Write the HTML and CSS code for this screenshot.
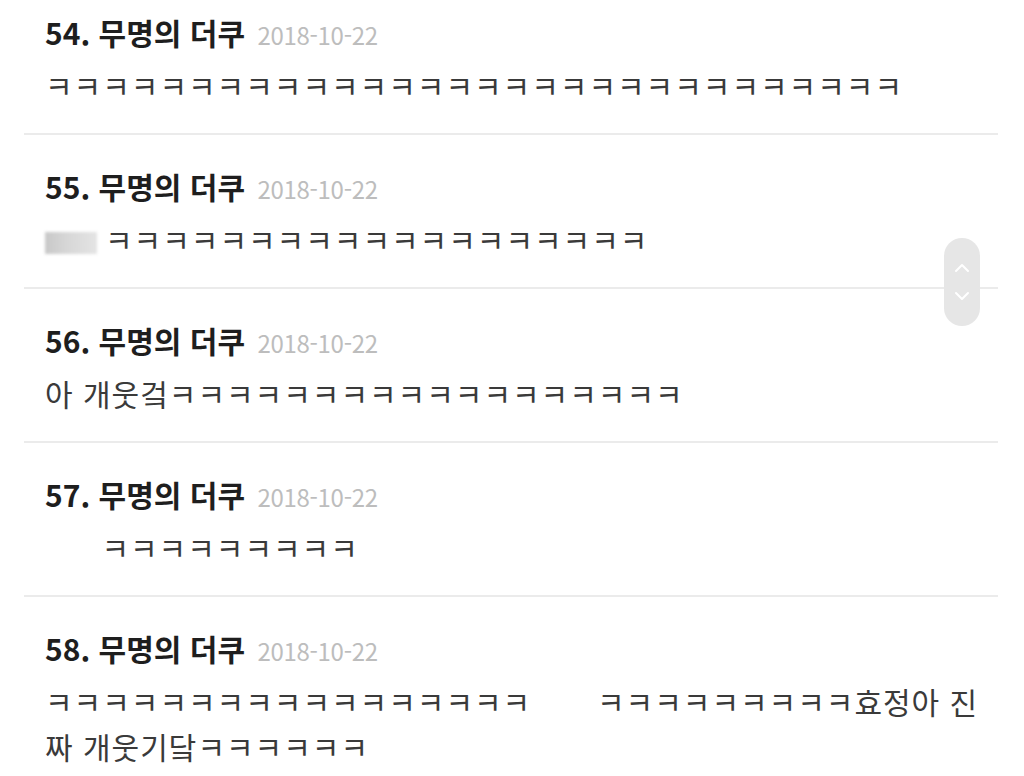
FILE: index.html
```html
<!DOCTYPE html>
<html lang="ko">
<head>
    <meta charset="UTF-8">
    <meta name="viewport" content="width=device-width, initial-scale=1.0">
    <title>댓글</title>
    <link rel="stylesheet" href="styles.css">
</head>
<body>
    <ul class="comments">
        <li class="comment">
            <div class="comment-head"><span class="num">54. 무명의 더쿠</span> <span class="date">2018-10-22</span></div>
            <p class="comment-body">ㅋㅋㅋㅋㅋㅋㅋㅋㅋㅋㅋㅋㅋㅋㅋㅋㅋㅋㅋㅋㅋㅋㅋㅋㅋㅋㅋㅋㅋㅋ</p>
        </li>
        <li class="comment">
            <div class="comment-head"><span class="num">55. 무명의 더쿠</span> <span class="date">2018-10-22</span></div>
            <p class="comment-body"><span class="emoticon"></span>ㅋㅋㅋㅋㅋㅋㅋㅋㅋㅋㅋㅋㅋㅋㅋㅋㅋㅋㅋ</p>
        </li>
        <li class="comment">
            <div class="comment-head"><span class="num">56. 무명의 더쿠</span> <span class="date">2018-10-22</span></div>
            <p class="comment-body">아 개웃겈ㅋㅋㅋㅋㅋㅋㅋㅋㅋㅋㅋㅋㅋㅋㅋㅋㅋㅋ</p>
        </li>
        <li class="comment">
            <div class="comment-head"><span class="num">57. 무명의 더쿠</span> <span class="date">2018-10-22</span></div>
            <p class="comment-body">      ㅋㅋㅋㅋㅋㅋㅋㅋㅋ</p>
        </li>
        <li class="comment">
            <div class="comment-head"><span class="num">58. 무명의 더쿠</span> <span class="date">2018-10-22</span></div>
            <p class="comment-body">ㅋㅋㅋㅋㅋㅋㅋㅋㅋㅋㅋㅋㅋㅋㅋㅋㅋ       ㅋㅋㅋㅋㅋㅋㅋㅋㅋ효정아 진짜 개웃기닼ㅋㅋㅋㅋㅋㅋ</p>
        </li>
    </ul>

    <div class="scroller">
        <svg viewBox="0 0 36 88" width="36" height="88">
            <path d="M12 33 L18 27 L24 33" fill="none" stroke="#fff" stroke-width="2" stroke-linecap="round" stroke-linejoin="round"/>
            <path d="M12 55 L18 61 L24 55" fill="none" stroke="#fff" stroke-width="2" stroke-linecap="round" stroke-linejoin="round"/>
        </svg>
    </div>
</body>
</html>
```

FILE: styles.css
```css
body {
    margin: 0;
    background-color: #ffffff;
    font-family: "Noto Sans CJK KR", "Noto Sans", sans-serif;
    overflow: hidden;
}
.comments {
    list-style: none;
    margin: 0 26px 0 24px;
    padding: 0;
}
.comment {
    padding: 30px 10px 25px 21px;
    border-top: 2px solid #ebebeb;
}
.comment:first-child {
    padding-top: 11px;
    border-top: none;
}
.comment-head {
    height: 42px;
    line-height: 42px;
    white-space: nowrap;
}
.num {
    font-size: 30px;
    font-weight: bold;
    color: #1e1e1e;
    letter-spacing: 0;
}
.date {
    font-size: 24px;
    color: #bdbdbd;
    margin-left: 8px;
    letter-spacing: -0.3px;
}
.comment-body {
    margin: 10px 0 0 0;
    font-size: 30px;
    line-height: 45px;
    color: #3a3a3a;
    letter-spacing: 1px;
    white-space: pre-wrap;
    word-break: break-all;
}
.emoticon {
    display: inline-block;
    width: 52px;
    height: 22px;
    margin-right: 8px;
    vertical-align: -2px;
    background: linear-gradient(to right, #c8c8c8, #d6d6d6 40%, #e4e4e4);
    filter: blur(1.5px);
}
.scroller {
    position: absolute;
    left: 944px;
    top: 238px;
    width: 36px;
    height: 88px;
    border-radius: 18px;
    background-color: #e6e6e6;
}
.scroller svg {
    display: block;
}
```
